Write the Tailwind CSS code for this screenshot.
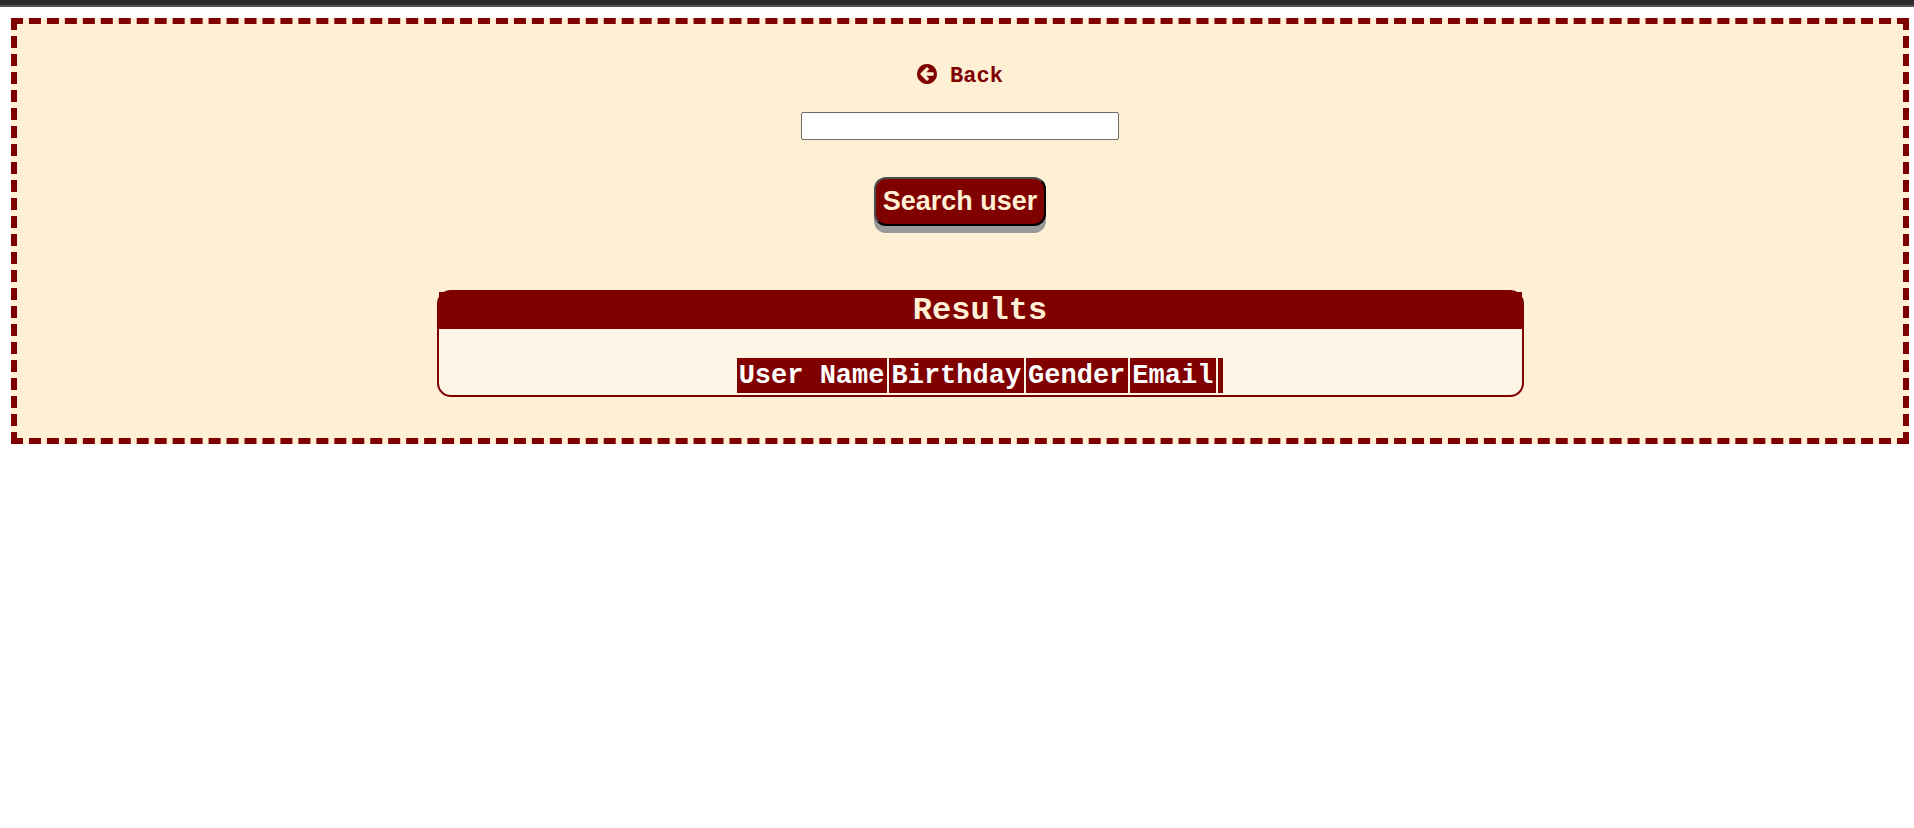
<!DOCTYPE html>
<html lang="en">
<head>
<meta charset="utf-8">
<title>Search user</title>
<script src="https://cdn.jsdelivr.net/npm/@tailwindcss/browser@4"></script>
</head>
<body class="bg-white font-['Courier_New','Liberation_Mono',monospace] font-bold">
<header class="h-[7px] border-b-2 border-[#555555] bg-[#2d2d2d]"></header>
<main class="mt-[11px] mr-[5px] ml-[11px] flex flex-col items-center border-6 border-dashed border-[#800000] bg-[#ffefd5] pt-9 pb-[41px]">
  <a href="#" class="flex items-start gap-[13px] text-[22px] leading-7 text-[#800000]">
    <svg class="mt-1 size-5" viewBox="128 128 1536 1536" fill="currentColor" aria-hidden="true"><path d="M1408 960v-128q0-26-19-45t-45-19h-502l189-189q19-19 19-45t-19-45l-91-91q-18-18-45-18t-45 18l-362 362-91 91q-18 18-18 45t18 45l91 91 362 362q18 18 45 18t45-18l91-91q18-18 18-45t-18-45l-189-189h502q26 0 45-19t19-45zm256-64q0 209-103 385.5t-279.5 279.5-385.5 103-385.5-103-279.5-279.5-103-385.5 103-385.5 279.5-279.5 385.5-103 385.5 103 279.5 279.5 103 385.5z"/></svg>
    <span class="pt-[5px] leading-[23px]">Back</span>
  </a>
  <input type="text" aria-label="User name" class="mt-6 h-7 w-[318px] rounded-xs border border-[#6b6b6b] bg-white px-1 text-base font-normal">
  <button type="button" class="mt-[37px] h-[49px] rounded-xl border-2 border-t-[#4d4d4d] border-r-black border-b-black border-l-[#4d4d4d] bg-[#800000] px-[7px] pb-[2px] font-['Liberation_Sans',sans-serif] text-[27px] leading-8 text-[#ffefd5] shadow-[0_7px_#999999]">Search user</button>
  <div class="mt-16 flex w-full justify-center pl-10">
    <section class="w-full max-w-[1087px] rounded-[14px] border-2 border-[#800000] bg-[#fdf5e6]">
      <h1 class="bg-[#800000] text-center text-[32px] leading-[37px] text-[#ffefd5]">Results</h1>
      <table class="mx-auto mt-[27px] border-separate border-spacing-[2px] text-[27px] leading-[31px] text-white">
        <thead>
          <tr>
            <th class="bg-[#800000] pt-[3px] pr-[3px] pb-px pl-[2px]">User Name</th>
            <th class="bg-[#800000] pt-[3px] pr-[3px] pb-px pl-[2px]">Birthday</th>
            <th class="bg-[#800000] pt-[3px] pr-[3px] pb-px pl-[2px]">Gender</th>
            <th class="bg-[#800000] pt-[3px] pr-[3px] pb-px pl-[2px]">Email</th>
            <th class="bg-[#800000] pt-[3px] pr-[3px] pb-px pl-[2px]"></th>
          </tr>
        </thead>
      </table>
    </section>
  </div>
</main>
</body>
</html>
